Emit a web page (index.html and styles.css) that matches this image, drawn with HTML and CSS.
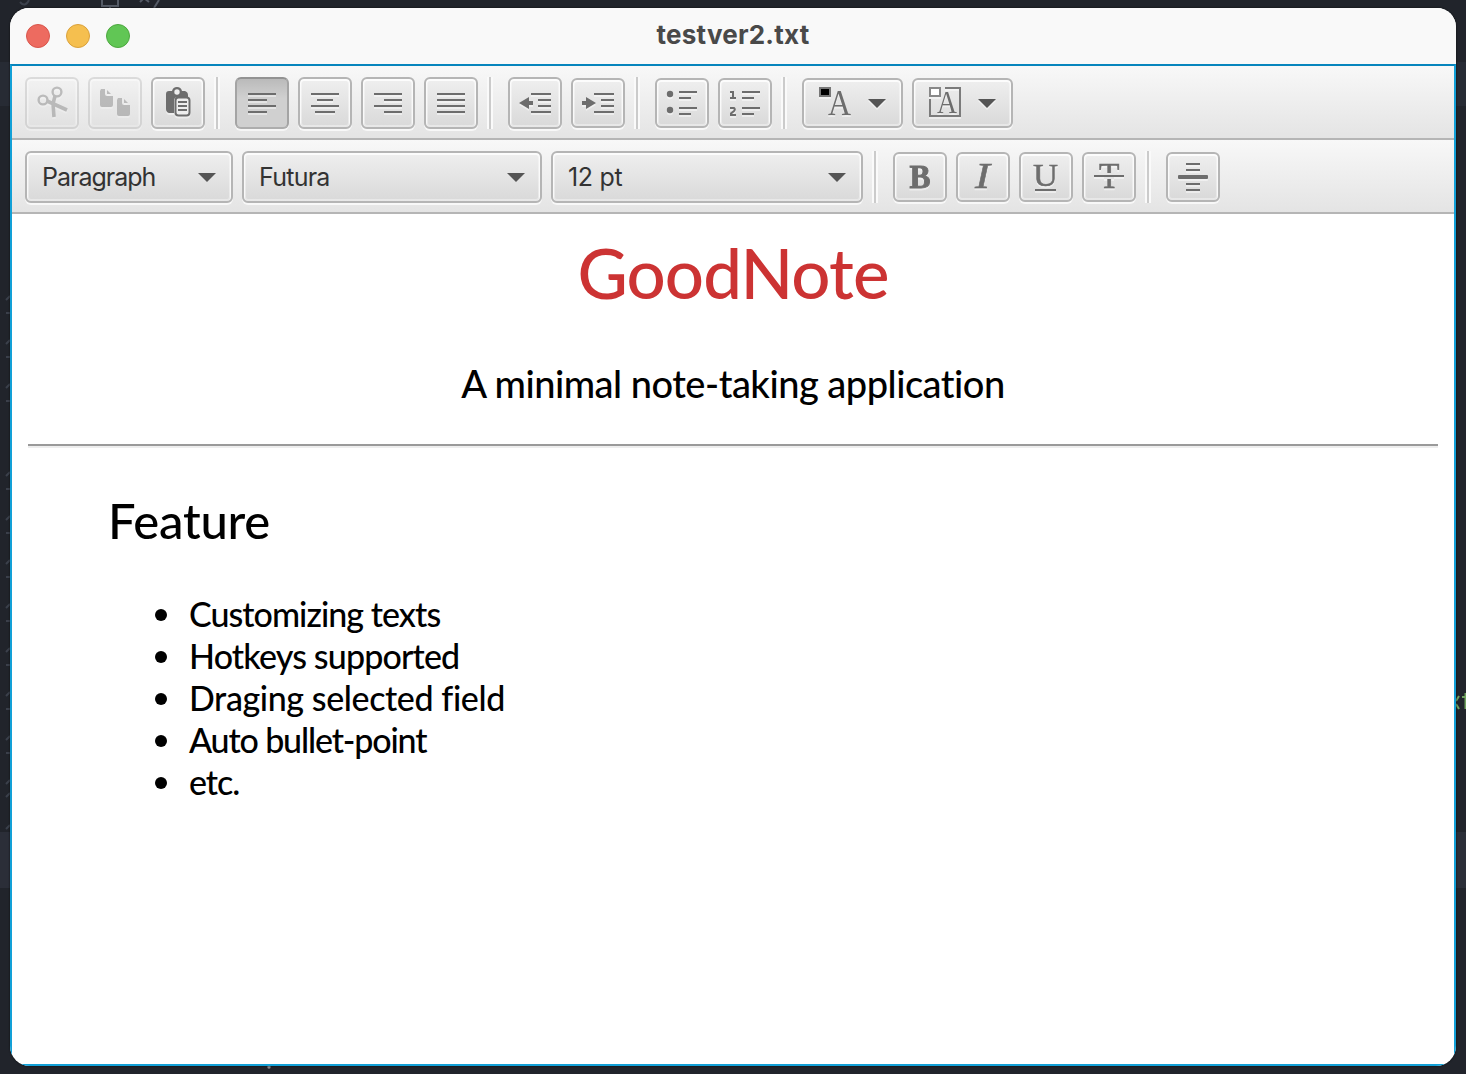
FILE: index.html
```html
<!DOCTYPE html>
<html lang="en">
<head>
<meta charset="utf-8">
<title>testver2.txt</title>
<link rel="stylesheet" href="styles.css">
</head>
<body>
<svg class="backdrop" width="1466" height="1074" viewBox="0 0 1466 1074" aria-hidden="true">
  <path fill="#272b34" d="M0 62H1466V106H0z"/>
  <path fill="#2b2e38" d="M0 832H1466V888H0z"/>
  <g fill="none" stroke="#555b66" stroke-width="2">
    <path d="M102 0V6H118V0M110 6V9M140 2L144 -2L149 2M159 0L154 8"/>
    <path stroke="#3b404b" d="M20 2Q25 8 29 0"/>
    <path stroke="#3b404b" d="M6 300L10 296M6 313H10M6 344L10 340M6 357H10M6 388L10 384M6 401H10M6 476L10 472M6 489H10M6 520L10 516M6 533H10M6 564L10 560M6 577H10M6 608L10 604M6 621H10M6 652L10 648M6 665H10M6 696L10 692M6 709H10M6 740L10 736M6 753H10M6 784L10 780M6 797L10 793M6 829L10 825"/>
    <path stroke="#70a25f" d="M1459 696L1456 701M1456 704L1459 709M1462 697H1466M1465.5 693V709"/>
  </g>
  <circle cx="269" cy="1067" r="1.7" fill="#888b90"/>
</svg>
<main class="window">
  <header class="titlebar">
    <div class="lights"><i class="red"></i><i class="yellow"></i><i class="green"></i></div>
    <h1 class="title">testver2.txt</h1>
  </header>
  <section class="editor">
    <div class="toolbar">
      <button class="btn tall off" aria-label="Cut"><svg viewBox="0 0 54 52"><g fill="none" stroke="#6d6d6d" stroke-width="2.4"><circle cx="18" cy="23" r="4.4"/><circle cx="32" cy="15" r="4.4"/></g><path fill="none" stroke="#6d6d6d" stroke-width="3.6" d="M22 24L42 33M30 19L28 27L29 40"/></svg></button>
      <button class="btn tall off" aria-label="Copy"><svg viewBox="0 0 54 52"><path fill="#6d6d6d" d="M13 12H17V17Q17 19 19 19H25V28Q25 30 23 30H14Q12 30 12 28V14zM19 13L23 17H19zM30 21H34V26Q34 28 36 28H42V37Q42 39 40 39H31Q29 39 29 37V23zM36 22L40 26H36z"/></svg></button>
      <button class="btn tall" aria-label="Paste"><svg viewBox="0 0 54 52"><path fill="#6d6d6d" d="M18 14H21Q22 10 26 10T31 14H34Q37 15 37 18V20H27Q23 20 23 24V36H18Q15 35 15 32V17Q15 14 18 14z"/><circle cx="26" cy="15" r="2.7" fill="#eee"/><rect x="24.5" y="20.5" width="14" height="18" rx="3" fill="#eee" stroke="#6d6d6d" stroke-width="2"/><path stroke="#6d6d6d" stroke-width="2" d="M27 25H36M27 29H36M27 33H36"/></svg></button>
      <i class="sep"></i>
      <button class="btn tall on" aria-label="Align left"><svg viewBox="0 0 54 52"><path class="l" d="M13 17H41M13 23H32M13 29H41M13 35H32"/></svg></button>
      <button class="btn tall" aria-label="Align center"><svg viewBox="0 0 54 52"><path class="l" d="M13 17H41M19 23H35M13 29H41M17 35H37"/></svg></button>
      <button class="btn tall" aria-label="Align right"><svg viewBox="0 0 54 52"><path class="l" d="M13 17H41M23 23H41M13 29H41M23 35H41"/></svg></button>
      <button class="btn tall" aria-label="Justify"><svg viewBox="0 0 54 52"><path class="l" d="M13 17H41M13 23H41M13 29H41M13 35H41"/></svg></button>
      <i class="sep"></i>
      <button class="btn tall" aria-label="Outdent"><svg viewBox="0 0 54 52"><path class="l" d="M23 17H43M30 23H43M30 29H43M23 35H43"/><path fill="#6d6d6d" d="M11 26L21 20V24H25V28H21V32z"/></svg></button>
      <button class="btn" aria-label="Indent"><svg viewBox="0 0 54 50"><path class="l" d="M23 16H43M30 22H43M30 28H43M23 34H43"/><path fill="#6d6d6d" d="M25 25L15 19V23H11V27H15V31z"/></svg></button>
      <i class="sep"></i>
      <button class="btn" aria-label="Bulleted list"><svg viewBox="0 0 54 50"><path class="l" d="M24 14H42M24 20H36M24 30H42M24 36H36"/><g fill="#6d6d6d"><circle cx="15" cy="16" r="3.2"/><circle cx="15" cy="32" r="3.2"/></g></svg></button>
      <button class="btn" aria-label="Numbered list"><svg viewBox="0 0 54 50"><path class="l" d="M24 14H42M24 20H36M24 30H42M24 36H36"/><path fill="none" stroke="#6d6d6d" stroke-width="2" d="M12 14H15V20M12 20H18M12 30H16Q17.5 31.5 16 33L13 35.5V37H18"/></svg></button>
      <i class="sep"></i>
      <button class="btn color" aria-label="Text color"><svg viewBox="0 0 101 50"><text class="serif" x="26" y="37" font-size="35" textLength="23" lengthAdjust="spacingAndGlyphs">A</text><path fill="#000" stroke="#777" stroke-width="2" d="M18 10H28V18H18z"/><path fill="#555" d="M66 21H84L75 30z"/></svg></button>
      <button class="btn color" aria-label="Background color"><svg viewBox="0 0 101 50"><path fill="none" stroke="#7b7b7b" stroke-width="2" d="M33 10H48V38H18V21"/><text class="serif" x="25" y="35" font-size="32" textLength="20" lengthAdjust="spacingAndGlyphs">A</text><path fill="#fff" stroke="#888" stroke-width="2" d="M18 10H28V18H18z"/><path fill="#555" d="M66 21H84L75 30z"/></svg></button>
    </div>
    <div class="toolbar">
      <button class="btn tall combo para"><span class="t1">Paragraph</span><i class="arrow"></i></button>
      <button class="btn tall combo font"><span class="t2">Futura</span><i class="arrow"></i></button>
      <button class="btn tall combo size"><span class="t3">12 pt</span><i class="arrow"></i></button>
      <i class="sep"></i>
      <button class="btn" aria-label="Bold"><svg viewBox="0 0 54 50"><text class="serif heavy" x="16.5" y="35.5" font-size="34" font-weight="bold" textLength="21" lengthAdjust="spacingAndGlyphs">B</text></svg></button>
      <button class="btn" aria-label="Italic"><svg viewBox="0 0 54 50"><text class="serif thick" x="19" y="36" font-size="35" font-style="italic" textLength="15" lengthAdjust="spacingAndGlyphs">I</text></svg></button>
      <button class="btn" aria-label="Underline"><svg viewBox="0 0 54 50"><text class="serif thick" x="14" y="34" font-size="32" textLength="25" lengthAdjust="spacingAndGlyphs">U</text><path class="l" d="M16 38H37"/></svg></button>
      <button class="btn" aria-label="Strikethrough"><svg viewBox="0 0 54 50"><text class="serif thick" x="17" y="36" font-size="35" textLength="20.5" lengthAdjust="spacingAndGlyphs">T</text><path stroke="#e5e5e5" stroke-width="6" d="M22 24H32"/><path class="l" d="M12 24H42"/></svg></button>
      <i class="sep"></i>
      <button class="btn" aria-label="Insert horizontal rule"><svg viewBox="0 0 54 50"><path class="l" d="M20 12H34M20 18H34M20 32H34M20 38H34"/><rect x="12" y="23" width="30" height="4" rx="1" fill="#6d6d6d"/></svg></button>
    </div>
    <article class="page">
      <h2 class="name">GoodNote</h2>
      <p class="tagline">A minimal note-taking application</p>
      <hr class="rule">
      <h3 class="feature">Feature</h3>
      <ul class="list">
        <li class="i1">Customizing texts</li>
        <li class="i2">Hotkeys supported</li>
        <li class="i3">Draging selected field</li>
        <li class="i4">Auto bullet-point</li>
        <li class="i5">etc.</li>
      </ul>
    </article>
  </section>
</main>
</body>
</html>
```
FILE: styles.css
```css
* { box-sizing: border-box; }
body { margin: 0; width: 1466px; height: 1074px; overflow: hidden; padding: 8px 10px; background: #21242b; }
.backdrop { position: absolute; left: 0; top: 0; }
.window { position: relative; width: 1446px; height: 1058px; border-radius: 19px 19px 20px 20px; overflow: hidden; background: #fff; display: flex; flex-direction: column; box-shadow: 0 0 2px #08090b; }
.titlebar { height: 56px; background: #f9f9f9; display: grid; grid-template-columns: 1fr auto 1fr; align-items: center; }
.lights { display: flex; gap: 16px; padding-left: 16px; }
.lights i { width: 24px; height: 24px; border-radius: 50%; border: 1px solid #d8564c; background: #ed6b60; }
.lights .yellow { background: #f5bf4f; border-color: #d9a13c; }
.lights .green { background: #61c655; border-color: #4da73f; }
.title { margin: 0; padding-bottom: 2px; font: 700 26px/52px Inter, sans-serif; color: #494949; letter-spacing: 0.22px; }
.editor { height: 1002px; border: 2px solid #12a0d7; border-top-color: #0785bd; }
.toolbar { height: 74px; border-bottom: 2px solid #b5b5b5; background: linear-gradient(#f8f8f8, #e4e4e4); padding: 2px 13px 0; display: flex; align-items: center; gap: 9px; }
.btn { flex: none; width: 54px; height: 50px; padding: 0; border: 2px solid #b5b5b5; border-radius: 6px; background: linear-gradient(#efefef, #d9d9d9); box-shadow: inset 0 0 0 2px rgba(255,255,255,.38), inset 0 1px 0 1px rgba(255,255,255,.7), 0 2px 0 rgba(255,255,255,.7); }
.btn svg { display: block; margin: -2px; width: calc(100% + 4px); height: calc(100% + 4px); filter: drop-shadow(0 2px 0 rgba(255,255,255,.45)); }
.tall { height: 52px; }
.off { opacity: .4; }
.on { border-color: #929292 #a4a4a4 #adadad; background: linear-gradient(#bababa, #d0d0d0 40%); box-shadow: 0 2px 0 #f6f6f6; }
.color { width: 101px; }
.l { fill: none; stroke: #6d6d6d; stroke-width: 2; }
.serif { font-family: "Liberation Serif", serif; fill: #6d6d6d; }
.thick { stroke: #6d6d6d; stroke-width: .5; }
.heavy { stroke: #6d6d6d; stroke-width: 1; }
.sep { flex: none; width: 6px; height: 52px; margin-right: 6px; background: linear-gradient(90deg, #fafafa 2px, #cbcbcb 2px 4px, #fafafa 4px); }
.combo { display: flex; align-items: center; justify-content: space-between; padding: 0 15px; font: 25px/46px Inter, sans-serif; color: #333; }
.para { width: 208px; }
.font { width: 300px; }
.size { width: 312px; }
.t1 { letter-spacing: -1px; }
.t2 { letter-spacing: -0.75px; }
.t3 { letter-spacing: -0.3px; }
.arrow { width: 18px; height: 9px; background: #555; clip-path: polygon(0 0, 100% 0, 50% 100%); margin-top: 1px; }
.page { padding: 16px; color: #000; font-family: Futura, Lato, sans-serif; font-weight: 500; font-variant-ligatures: none; }
.name { margin: 0; height: 88px; font-size: 69px; line-height: 86px; text-align: center; color: #cc3333; font-weight: 500; letter-spacing: -0.9px; }
.tagline { margin: 43px 0 0; height: 52px; font-size: 38px; line-height: 44px; text-align: center; letter-spacing: -0.5px; }
.rule { margin: 31px 0 0; height: 4px; border: 0; border-top: 2px solid #9a9a9a; border-bottom: 2px solid #eee; }
.feature { margin: 41px 0 0 80px; font-size: 49px; line-height: 62px; font-weight: 500; letter-spacing: -0.25px; }
.list { margin: 42px 0 0; padding: 0 0 0 160px; font-size: 34px; line-height: 42px; list-style: none; }
.list li { display: flex; align-items: center; }
.list li::before { content: ""; width: 12px; height: 12px; border-radius: 50%; background: #000; margin: 2px 22px 0 -33px; }
.i1 { letter-spacing: -0.95px; }
.i2 { letter-spacing: -0.85px; }
.i3 { letter-spacing: -0.4px; }
.i4 { letter-spacing: -1.15px; }
.i5 { letter-spacing: -1px; }
```
